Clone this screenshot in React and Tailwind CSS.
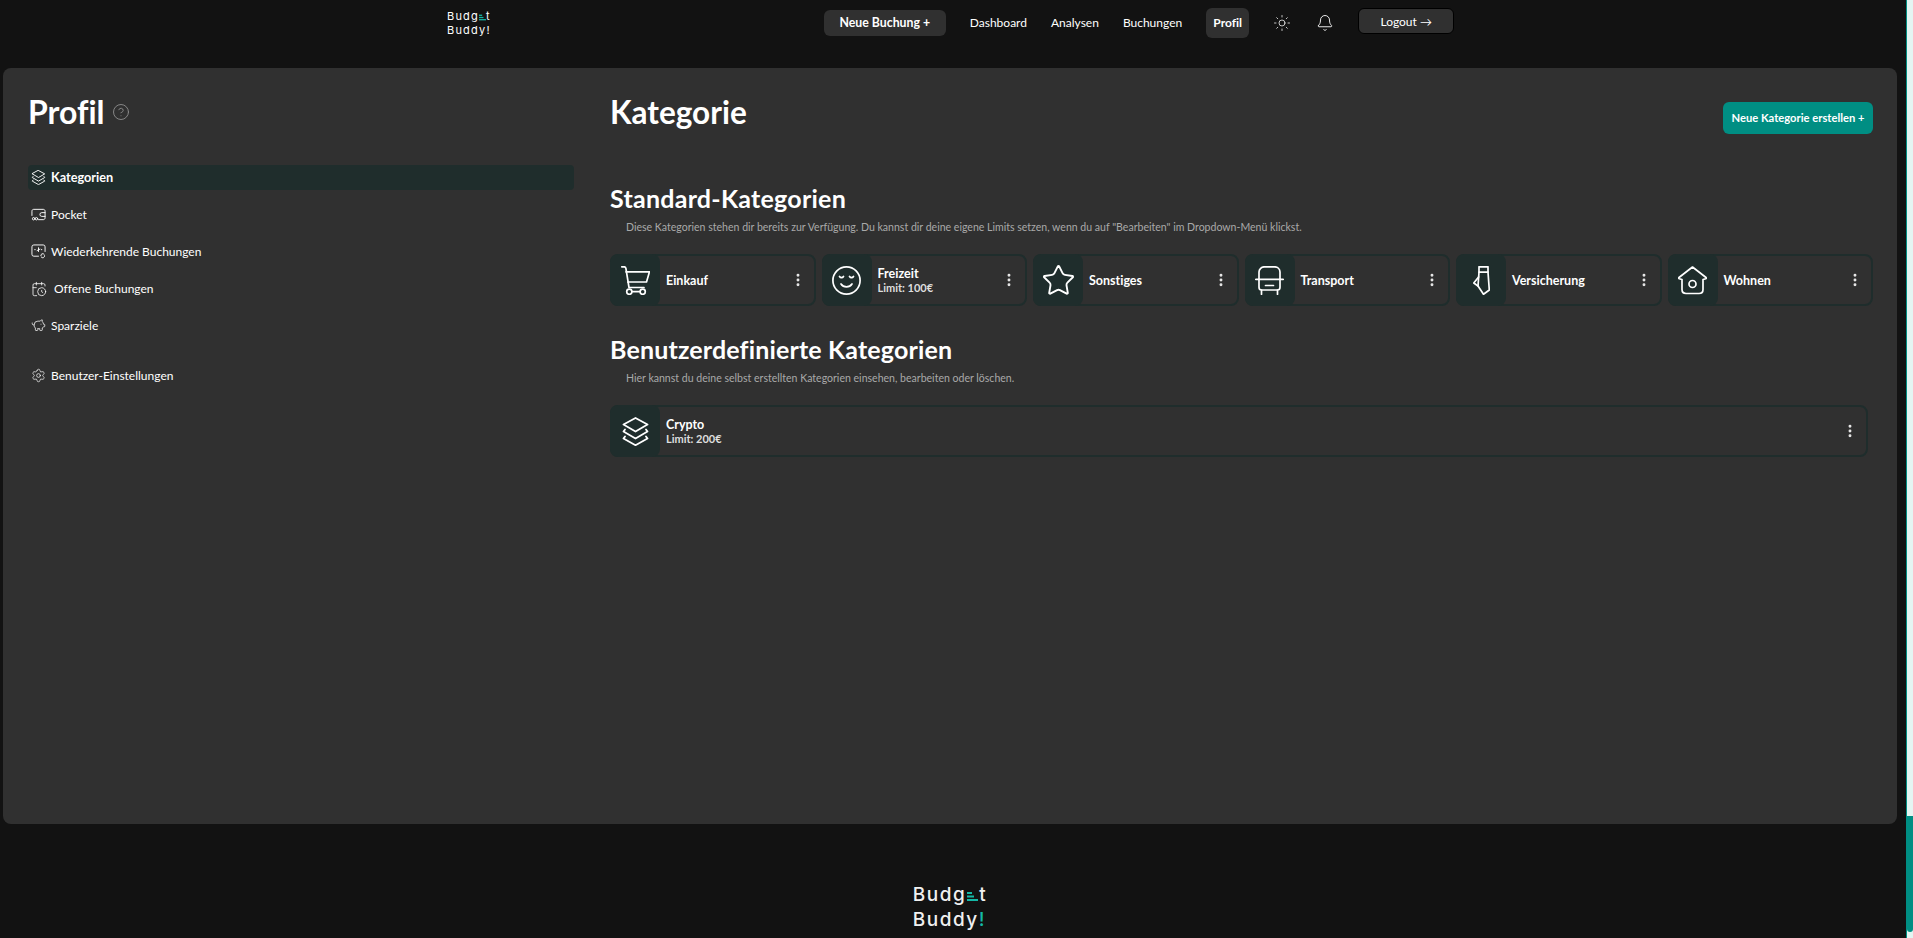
import React from "react";
import { CalendarClock, PiggyBank, Settings, CircleHelp, Sun, Bell, Star, MoreVertical } from "lucide-react";

const font = "font-['Lato',sans-serif] [font-variant-ligatures:none]";

function Logo({ small }) {
  return (
    <div className={small ? "font-['Inter',sans-serif] text-[11px] leading-[14px] tracking-[1.2px] text-white" : "font-['Inter',sans-serif] text-[19px] leading-[25px] tracking-[1.5px] font-medium text-[#f0f0f0]"}>
      <div className="flex items-center">
        Budg
        <svg viewBox="0 0 11 11" className={small ? "w-[7px] h-[7px] mt-[2px]" : "w-[11px] h-[11px] mt-[3px] mx-[1px]"}>
          <rect x="0" y="1" width="5" height="2" fill="#14b8a6" />
          <rect x="0" y="4.500" width="7" height="2" fill="#14b8a6" />
          <rect x="0" y="8" width="11" height="2" fill="#14b8a6" />
        </svg>
        t
      </div>
      <div>
        Buddy<span className={small ? "" : "text-[#14b8a6]"}>!</span>
      </div>
    </div>
  );
}

const iconProps = { fill: "none", stroke: "white", strokeWidth: 1.7, strokeLinecap: "round", strokeLinejoin: "round" };

const Bus = () => (
  <svg viewBox="0 0 29 29" className="w-[29px] h-[29px]" {...iconProps}>
    <path d="M4 13V6c0-3 2.500-5.200 5.500-5.200h10c3 0 5.500 2.200 5.500 5.200v7" />
    <path d="M.8 13.300h27.400" />
    <path d="M4 13.300v8c0 1.500 1 2.700 2.500 2.700h16c1.500 0 2.500-1.200 2.500-2.700v-8" />
    <path d="M10.500 19.500h8" />
    <path d="M6.500 24v4.300M22.500 24v4.300" />
  </svg>
);

const Tie = () => (
  <svg viewBox="0 0 17 29" className="w-[17px] h-[29px]" {...iconProps}>
    <path d="M6 .8h9v5.400H6z" />
    <path d="M6 6.200L5 20l5.500 8.300L16.300 24 15 6.200" />
    <path d="M5.600 11L.8 17 5 20" />
  </svg>
);

const House = () => (
  <svg viewBox="0 0 29 29" className="w-[29px] h-[29px]" {...iconProps}>
    <path d="M14.500 1L28 11.500c.5.400.3 1-.3 1.200l-2.700.8v10c0 2.500-1.500 4-4 4H8c-2.500 0-4-1.500-4-4v-10l-2.700-.8c-.6-.2-.8-.8-.3-1.200z" />
    <circle cx="14.500" cy="18" r="3.500" />
  </svg>
);

const Cart = () => (
  <svg viewBox="0 0 29 29" className="w-[29px] h-[29px]" {...iconProps}>
    <path d="M.8.8h2.400c1 0 1.500.5 1.700 1.500L8 21.500h15" />
    <path d="M5 5.800h23.500L25.500 16H6.800" />
    <circle cx="8.300" cy="25.700" r="2.600" />
    <circle cx="21.700" cy="25.700" r="2.600" />
    <path d="M10.900 25.700h8.200" />
  </svg>
);

const Face = () => (
  <svg viewBox="0 0 29 29" className="w-[29px] h-[29px]" {...iconProps}>
    <circle cx="14.500" cy="14.500" r="13.600" />
    <path d="M7.500 10.500c1 1.500 3 1.500 4 0M17.500 10.500c1 1.500 3 1.500 4 0" />
    <path d="M9 18c2.500 3.800 8.500 3.800 11 0" />
  </svg>
);

const Stack = ({ className }) => (
  <svg viewBox="0 0 27 29" className={className} {...iconProps} strokeWidth="1.800">
    <path d="M13.500 1l12 6.500-12 7-12-7z" />
    <path d="M3 12.500l-1.500 2 12 7 12-7-1.500-2" />
    <path d="M3 19.500l-1.500 2 12 6.700 12-6.700-1.500-2" />
  </svg>
);

const Pocket = () => (
  <svg viewBox="0 0 16 16" className="w-[15px] h-[15px]" fill="none" stroke="white" strokeWidth="1" strokeLinecap="round" strokeLinejoin="round">
    <path d="M1 9V4.500C1 3 2 2.500 3 2.500h10c1 0 2 .5 2 2v7c0 1.500-1 2-2 2H8" />
    <path d="M15 6h-3.500a2 2 0 0 0 0 4H15" />
    <circle cx="2.800" cy="12.500" r="1.300" />
    <circle cx="5.800" cy="12.500" r="1.300" />
  </svg>
);

const Recurring = () => (
  <svg viewBox="0 0 16 16" className="w-[15px] h-[15px]" fill="none" stroke="white" strokeWidth="1" strokeLinecap="round" strokeLinejoin="round">
    <path d="M8 13H3a2 2 0 0 1-2-2V3a2 2 0 0 1 2-2h10a2 2 0 0 1 2 2v5" />
    <path d="M4 6h.5M11 6h.5M8 4v4M6.500 7l3-1.500" />
    <path d="M10.500 12.500a2 2 0 0 1 3.500-1.500M14.500 12.500a2 2 0 0 1-3.500 1.500" />
  </svg>
);

const navItems = [
  { label: "Kategorien", icon: <Stack className="w-[15px] h-[15px]" />, active: true },
  { label: "Pocket", icon: <Pocket /> },
  { label: "Wiederkehrende Buchungen", icon: <Recurring /> },
  { label: "Offene Buchungen", icon: <CalendarClock size={16} strokeWidth={1.2} />, extra: true },
  { label: "Sparziele", icon: <PiggyBank size={15} strokeWidth={1.2} /> },
];

const cats = [
  { name: "Einkauf", icon: <Cart /> },
  { name: "Freizeit", limit: "Limit: 100€", icon: <Face /> },
  { name: "Sonstiges", icon: <Star size={35} strokeWidth={1.300} /> },
  { name: "Transport", icon: <Bus /> },
  { name: "Versicherung", icon: <Tie /> },
  { name: "Wohnen", icon: <House /> },
];

function Card({ cat, wide }) {
  return (
    <div className={`flex items-center h-[52px] rounded-lg border-2 border-[#1f2d2c] ${wide ? "w-[1258px]" : "flex-1 min-w-0"}`}>
      <div className="w-[50px] h-[52px] -ml-[2px] rounded-lg bg-[#1f2d2c] flex items-center justify-center shrink-0">{cat.icon}</div>
      <div className="ml-[6px] flex-1 min-w-0">
        <div className="text-[12.500px] leading-[15px] font-bold text-white">{cat.name}</div>
        {cat.limit && <div className="text-[11px] leading-[14px] font-bold text-[#dedede]">{cat.limit}</div>}
      </div>
      <MoreVertical size={16} strokeWidth={2.400} className="text-[#e8e8e8] mr-[8px] shrink-0" />
    </div>
  );
}

export default function App() {
  return (
    <div className={`${font} h-[938px] overflow-hidden bg-[#121212] text-white flex`}>
      <div className="flex-1 min-w-0 flex flex-col">
        <header className="h-[68px] flex items-start shrink-0 pl-[447px]">
          <div className="mt-[9px]"><Logo small /></div>
          <div className="ml-[333px] mt-[8px] flex items-start h-[30px]">
            <button className="mt-[2px] w-[122px] h-[26px] rounded-md bg-[#303030] text-[12.300px] font-bold text-white">Neue Buchung +</button>
            <nav className="ml-[24px] h-[30px] flex items-center text-[12px] text-white gap-[24px]">
              <span>Dashboard</span>
              <span>Analysen</span>
              <span>Buchungen</span>
            </nav>
            <div className="ml-[24px] w-[43px] h-[30px] rounded-md bg-[#303030] flex items-center justify-center text-[12px] font-bold">Profil</div>
            <Sun size={18} strokeWidth={1} className="ml-[24px] mt-[6px]" />
            <Bell size={18} strokeWidth={1.200} className="ml-[25px] mt-[6px]" />
            <button className="ml-[24px] w-[96px] h-[26px] pt-[1px] rounded-md bg-[#303030] border border-black text-[12px] text-white">Logout →</button>
          </div>
        </header>
        <main className="mx-[3px] w-[1894px] h-[756px] rounded-lg bg-[#303030] flex shrink-0">
          <aside className="w-[607px] pl-[25px] shrink-0">
            <div className="flex items-center mt-[23px] h-[42px]">
              <h1 className="text-[32px] font-bold leading-[42px] text-white">Profil</h1>
              <CircleHelp size={18} strokeWidth={1.200} className="ml-[7px] text-[#8f8f8f]" />
            </div>
            <div className="mt-[32px] w-[546px] flex flex-col">
              {navItems.map((it) => (
                <div key={it.label} className={`h-[25px] mb-[12px] rounded flex items-center pl-[3px] gap-[5px] ${it.active ? "text-[12.700px] bg-[#1f2d2c] font-bold" : "text-[12px]"}`}>
                  {it.icon}
                  <span className={it.extra ? "ml-[2px]" : ""}>{it.label}</span>
                </div>
              ))}
              <div className="h-[25px] mt-[13px] flex items-center pl-[3px] gap-[5px] text-[12px]">
                <Settings size={15} strokeWidth={1.100} />
                <span>Benutzer-Einstellungen</span>
              </div>
            </div>
          </aside>
          <section className="flex-1 min-w-0 pr-[24px]">
            <div className="flex items-start justify-between mt-[23px]">
              <h2 className="text-[31.500px] font-bold leading-[42px]">Kategorie</h2>
              <button className="mt-[11px] w-[150px] h-[32px] rounded-md bg-[#008e83] text-[11.200px] font-bold text-white">Neue Kategorie erstellen +</button>
            </div>
            <h3 className="mt-[48px] text-[25px] tracking-[0.25px] leading-[32px] font-bold">Standard-Kategorien</h3>
            <p className="mt-[6px] ml-[16px] text-[10.550px] leading-[15px] text-[#a9a9a9]">Diese Kategorien stehen dir bereits zur Verfügung. Du kannst dir deine eigene Limits setzen, wenn du auf "Bearbeiten" im Dropdown-Menü klickst.</p>
            <div className="mt-[19px] flex gap-[6px]">
              {cats.map((c) => <Card key={c.name} cat={c} />)}
            </div>
            <h3 className="mt-[27px] text-[25px] tracking-[0.15px] leading-[32px] font-bold">Benutzerdefinierte Kategorien</h3>
            <p className="mt-[6px] ml-[16px] text-[10.550px] leading-[15px] text-[#a9a9a9]">Hier kannst du deine selbst erstellten Kategorien einsehen, bearbeiten oder löschen.</p>
            <div className="mt-[19px]">
              <Card wide cat={{ name: "Crypto", limit: "Limit: 200€", icon: <Stack className="w-[27px] h-[29px]" /> }} />
            </div>
          </section>
        </main>
        <footer className="flex-1 flex justify-center pt-[58px] pr-[6px]">
          <Logo />
        </footer>
      </div>
      <div className="w-[7px] h-full bg-[#e4f5f2] border-l border-[#008e83] flex flex-col shrink-0">
        <div className="mt-[816px] h-[116px] bg-[#008e83] rounded-b" />
      </div>
    </div>
  );
}
